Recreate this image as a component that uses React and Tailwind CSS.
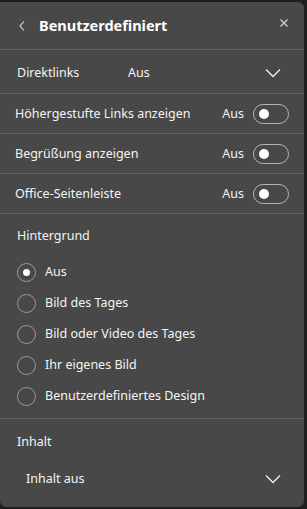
import React, { useState } from "react";

const font = { fontFamily: '"Noto Sans", "Open Sans", sans-serif' };

const Chevron = () => (
  <svg width="16" height="10" viewBox="0 0 16 10" fill="none">
    <path d="M1 1.5 L8 8.5 L15 1.5" stroke="#f2f2f2" strokeWidth="1.3" />
  </svg>
);

const Toggle = ({ onClick }) => (
  <button
    onClick={onClick}
    className="relative h-[20px] w-[36px] rounded-full border border-[#b5b5b5] bg-transparent"
  >
    <span className="absolute left-[5px] top-[4px] block h-[10px] w-[10px] rounded-full bg-white" />
  </button>
);

const Radio = ({ checked, label }) => (
  <div className="flex h-[31px] items-center">
    <span className="flex h-[19px] w-[19px] items-center justify-center rounded-full border border-[#9a9a9a]">
      {checked && <span className="block h-[7px] w-[7px] rounded-full bg-white" />}
    </span>
    <span className="ml-[9px] text-[12.5px] text-[#f4f4f4]">{label}</span>
  </div>
);

export default function App() {
  const [sel] = useState(0);
  const toggles = ["Höhergestufte Links anzeigen", "Begrüßung anzeigen", "Office-Seitenleiste"];
  const radios = [
    "Aus",
    "Bild des Tages",
    "Bild oder Video des Tages",
    "Ihr eigenes Bild",
    "Benutzerdefiniertes Design",
  ];

  return (
    <div className="h-[509px] w-[307px] bg-[#1e1e1e] pb-[2px] pr-[3px] pt-[2px]" style={font}>
      <div className="flex h-full flex-col rounded-b-[6px] rounded-tr-[6px] bg-[#484848] text-[#f4f4f4]">
        <div className="relative flex h-[48px] items-center border-b border-[#5f5f5f] pl-[19px]">
          <svg width="6" height="10" viewBox="0 0 6 10" fill="none" className="mt-[1px]">
            <path d="M5 0.5 L1 5 L5 9.5" stroke="#e0e0e0" strokeWidth="1.1" />
          </svg>
          <span className="ml-[14px] text-[14.5px] font-bold text-white">Benutzerdefiniert</span>
          <svg width="8" height="8" viewBox="0 0 8 8" className="absolute right-[16px] top-[17px]">
            <path d="M0.5 0.5 L7.5 7.5 M7.5 0.5 L0.5 7.5" stroke="#d8d8d8" strokeWidth="1.1" />
          </svg>
        </div>

        <div className="flex h-[44px] items-center border-b border-[#5f5f5f] pl-[17px] pr-[23px] pt-[3px] text-[12.5px]">
          <span className="w-[111px]">Direktlinks</span>
          <span className="flex-1">Aus</span>
          <Chevron />
        </div>

        {toggles.map((t) => (
          <div
            key={t}
            className="flex h-[40px] items-center border-b border-[#5f5f5f] pl-[15px] pr-[15px] pt-[1px] text-[12.5px]"
          >
            <span className="flex-1">{t}</span>
            <span className="mr-[9px]">Aus</span>
            <Toggle />
          </div>
        ))}

        <div className="border-b border-[#5f5f5f] pb-[6px] pl-[17px] pt-[13px]">
          <div className="mb-[11px] text-[12.5px]">Hintergrund</div>
          {radios.map((r, i) => (
            <Radio key={r} label={r} checked={i === sel} />
          ))}
        </div>

        <div className="pl-[17px] pr-[23px] pt-[14px]">
          <div className="text-[12.5px]">Inhalt</div>
          <div className="mt-[18px] flex items-center pl-[9px] text-[12.5px]">
            <span className="flex-1">Inhalt aus</span>
            <Chevron />
          </div>
        </div>
      </div>
    </div>
  );
}
